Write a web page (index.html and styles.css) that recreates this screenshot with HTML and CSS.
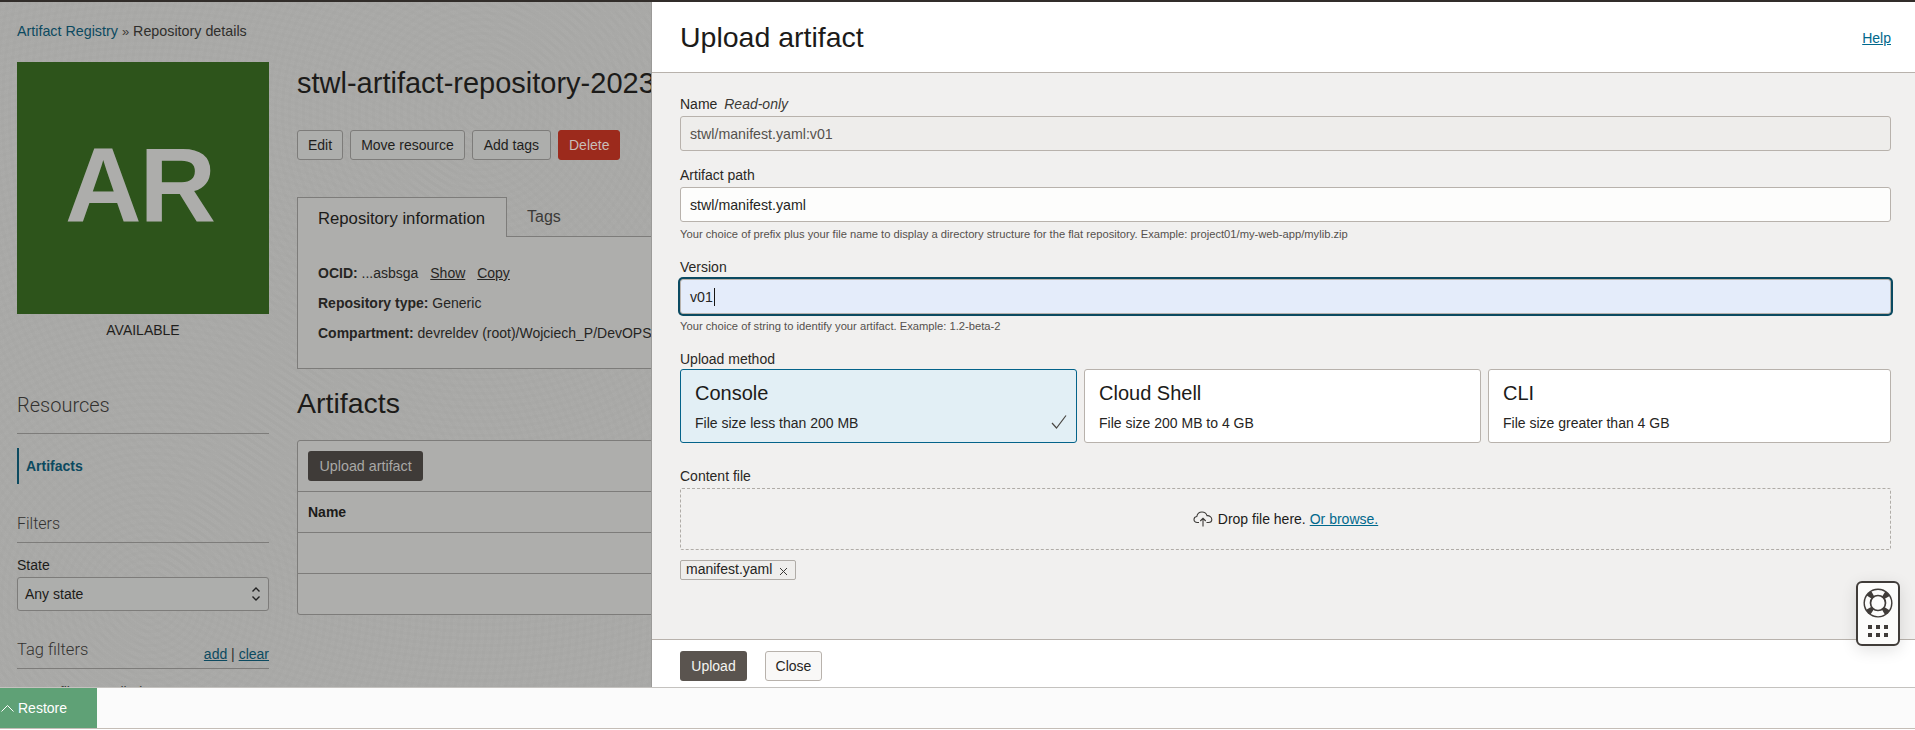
FILE: index.html
```html
<!DOCTYPE html>
<html lang="en">
<head>
<meta charset="utf-8">
<title>Upload artifact</title>
<link rel="stylesheet" href="styles.css">
</head>
<body>
<div class="topbar"></div>
<div class="stage">
  <div class="page">
    <div class="crumbs"><a class="link-plain" href="#">Artifact Registry</a> <span class="sep">»</span> Repository details</div>
    <div class="layout">
      <aside class="side">
        <div class="avatar">AR</div>
        <div class="status">AVAILABLE</div>
        <h3 class="side-head side-head-res">Resources</h3>
        <div class="nav-item">Artifacts</div>
        <h3 class="side-head side-head-filters">Filters</h3>
        <div class="state-label">State</div>
        <div class="select"><span>Any state</span>
          <svg class="select-arrows" width="10" height="16" viewBox="0 0 10 16"><path d="M1.5 5.5 5 2l3.500 3.500M1.500 10.500 5 14l3.500-3.500" fill="none" stroke="#222" stroke-width="1.400"/></svg>
        </div>
        <div class="side-head side-head-tags"><span>Tag filters</span><span class="tag-links"><a href="#">add</a> | <a href="#">clear</a></span></div>
        <div class="no-tags">no tag filters applied</div>
      </aside>
      <main class="content">
        <h1 class="res-title">stwl-artifact-repository-2023</h1>
        <div class="actions">
          <span class="btn">Edit</span><span class="btn">Move resource</span><span class="btn btn-tags">Add tags</span><span class="btn btn-danger">Delete</span>
        </div>
        <div class="tabs"><span class="tab tab-on">Repository information</span><span class="tab tab-off">Tags</span></div>
        <div class="tab-body">
          <div class="info"><b>OCID:</b> ...asbsga <a class="info-link" href="#">Show</a> <a class="info-link" href="#">Copy</a></div>
          <div class="info"><b>Repository type:</b> Generic</div>
          <div class="info"><b>Compartment:</b> devreldev (root)/Wojciech_P/DevOPS</div>
        </div>
        <h2 class="section-title">Artifacts</h2>
        <div class="table">
          <div class="toolbar"><span class="btn-dim">Upload artifact</span></div>
          <div class="row row-head">Name</div>
          <div class="row"></div>
          <div class="row row-last"></div>
        </div>
      </main>
    </div>
  </div>

  <section class="drawer">
    <header class="drawer-head">
      <h2 class="drawer-title">Upload artifact</h2>
      <a class="link" href="#">Help</a>
    </header>
    <div class="drawer-body">
      <div class="label">Name <i class="ro">Read-only</i></div>
      <div class="input input-ro">stwl/manifest.yaml:v01</div>
      <div class="label label-next">Artifact path</div>
      <div class="input">stwl/manifest.yaml</div>
      <div class="hint">Your choice of prefix plus your file name to display a directory structure for the flat repository. Example: project01/my-web-app/mylib.zip</div>
      <div class="label label-after-hint">Version</div>
      <div class="input input-focus">v01<span class="caret"></span></div>
      <div class="hint">Your choice of string to identify your artifact. Example: 1.2-beta-2</div>
      <div class="label label-after-hint">Upload method</div>
      <div class="cards">
        <div class="card card-on">
          <div class="card-title">Console</div>
          <div class="card-sub">File size less than 200 MB</div>
          <svg class="card-check" width="18" height="16" viewBox="0 0 18 16"><path d="M2 9l4.500 5L16 1.500" fill="none" stroke="#4a4743" stroke-width="1.200"/></svg>
        </div>
        <div class="card">
          <div class="card-title">Cloud Shell</div>
          <div class="card-sub">File size 200 MB to 4 GB</div>
        </div>
        <div class="card">
          <div class="card-title">CLI</div>
          <div class="card-sub">File size greater than 4 GB</div>
        </div>
      </div>
      <div class="label label-file">Content file</div>
      <div class="dropzone">
        <svg class="cloud" width="20" height="16" viewBox="0 0 20 16"><path d="M6 11.500H4.200C2.400 11.500 1 10.200 1 8.500S2.300 5.700 3.800 5.500C4.300 2.900 6.400 1 9 1c2.400 0 4.300 1.500 5 3.700 2.500-.3 4.800 1.500 4.800 3.800 0 1.800-1.500 3-3.300 3H13.500M10 15.500V7.500M7.300 10 10 7.300 12.700 10" fill="none" stroke="#3c3a37" stroke-width="1.100"/></svg>
        <span>Drop file here.</span> <a class="link" href="#">Or browse.</a>
      </div>
      <div class="chip">manifest.yaml
        <svg class="chip-x" width="9" height="9" viewBox="0 0 9 9"><path d="M1 1l7 7M8 1 1 8" stroke="#3c3a37" stroke-width="1"/></svg>
      </div>
    </div>
    <footer class="drawer-foot">
      <span class="btn-primary">Upload</span><span class="btn-close">Close</span>
    </footer>
    <div class="help-widget">
      <svg width="30" height="30" viewBox="0 0 32 32">
        <circle cx="16" cy="16" r="15.500" fill="#403c39"/>
        <circle cx="16" cy="16" r="11" fill="none" stroke="#fcfcfb" stroke-width="6" stroke-dasharray="12.280 5" stroke-dashoffset="6.140" transform="rotate(-90 16 16)"/>
        <circle cx="16" cy="16" r="8" fill="#fcfcfb" stroke="#403c39" stroke-width="1.800"/>
      </svg>
      <div class="help-dots"><i></i><i></i><i></i><i></i><i></i><i></i></div>
    </div>
  </section>
</div>
<div class="dock">
  <div class="restore">
    <svg width="13" height="8" viewBox="0 0 13 8"><path d="M.5 7.500 6.500 1.500l6 6" fill="none" stroke="#fff" stroke-width="1"/></svg>
    <span>Restore</span>
  </div>
</div>
</body>
</html>
```

FILE: styles.css
```css
* { box-sizing: border-box; }
html, body { margin: 0; padding: 0; height: 730px; overflow: hidden; background: #fff; }
body { font-family: "Liberation Sans", Arial, sans-serif; font-size: 14px; color: #1c1b19; }
a { color: inherit; }

.topbar { height: 2px; background: #312d2a; }
.stage { position: relative; height: 685px; overflow: hidden; }

.page {
  height: 685px;
  padding: 20px 0 0 17px;
  overflow: hidden;
  background-color: #a9a9a7;
  background-image:
    repeating-radial-gradient(circle at 480px 110px, rgba(0,0,0,.008) 0 3px, rgba(255,255,255,.006) 3px 7px),
    repeating-radial-gradient(circle at 150px 600px, rgba(0,0,0,.008) 0 3px, rgba(255,255,255,.006) 3px 7px);
}
.crumbs { line-height: 18px; height: 18px; font-size: 14.300px; color: #2f2e2c; white-space: nowrap; }
.link-plain { color: #0c4a60; text-decoration: none; }
.sep { color: #3c3b39; font-size: 13px; line-height: 1; }
.layout { display: flex; gap: 28px; margin-top: 22px; width: 1880px; }

.side { width: 252px; flex: none; }
.avatar {
  width: 252px; height: 252px; padding: 0 7px 5px 0; background: #2d541b; color: #adadab;
  font-weight: 700; font-size: 106px; letter-spacing: -2px;
  display: flex; align-items: center; justify-content: center;
}
.status { margin-top: 8px; line-height: 16px; text-align: center; color: #1f1e1c; }
.side-head {
  margin: 0; font-family: Roboto, "Liberation Sans", sans-serif; font-weight: 300; color: #333230;
  border-bottom: 1px solid #7d7c7a;
}
.side-head-res { margin-top: 53px; font-size: 20px; line-height: 28px; padding-bottom: 14px; }
.side-head-filters { margin-top: 28px; font-size: 16px; line-height: 24px; padding-bottom: 6px; }
.side-head-tags { margin-top: 27px; font-size: 16.500px; line-height: 24px; padding-bottom: 6px; display: flex; justify-content: space-between; align-items: flex-end; }
.tag-links { font-family: "Liberation Sans", Arial, sans-serif; font-size: 14px; font-weight: 400; line-height: 16px; color: #2f2e2c; }
.tag-links a { color: #0c4a60; }
.nav-item {
  margin-top: 14px; height: 36px; line-height: 36px; padding-left: 7px;
  border-left: 2px solid #0c4a60; color: #0c4a60; font-weight: 700;
}
.state-label { margin-top: 13px; line-height: 18px; }
.select {
  margin-top: 3px; height: 34px; padding: 0 7px; border: 1px solid #7d7c7a; border-radius: 3px;
  display: flex; align-items: center; justify-content: space-between; background: #adaeac;
}
.no-tags { margin-top: 14px; line-height: 18px; color: #3b3a38; }

.content { flex: 1; min-width: 0; }
.res-title { margin: 4px 0 0; font-weight: 400; font-size: 29px; line-height: 34px; white-space: nowrap; color: #1c1b19; }
.actions { display: flex; gap: 7px; margin-top: 30px; }
.btn, .btn-danger {
  height: 30px; line-height: 28px; padding: 0 10px; border: 1px solid #7d7c7a; border-radius: 3px;
  background: #adaeac; color: #1f1e1c; white-space: nowrap;
}
.btn-tags { padding: 0 11px; }
.btn-danger { background: #9c2a1c; border-color: #9c2a1c; color: #c8bdb8; }
.tabs { display: flex; margin-top: 37px; height: 40px; border-bottom: 1px solid #7d7c7a; }
.tab { padding: 0 20px; line-height: 38px; font-size: 16px; color: #3b3a38; }
.tab-off { padding-top: 1px; }
.tab-on {
  height: 40px; width: 210px; padding-top: 2px; font-size: 16.700px; white-space: nowrap; background: #aeaeac; border: 1px solid #7d7c7a; border-bottom: 0; color: #1c1b19;
}
.tab-body {
  height: 132px; padding: 21px 20px 0; background: #aeaeac;
  border: 1px solid #7d7c7a; border-top: 0; white-space: nowrap;
}
.info { line-height: 30px; color: #262523; }
.info-link { margin-left: 8px; }
.section-title { margin: 17px 0 0; font-weight: 400; font-size: 28.500px; line-height: 34px; color: #1c1b19; }
.table { margin-top: 20px; border: 1px solid #7d7c7a; border-radius: 3px; background: #aeaeac; }
.toolbar { height: 50px; padding: 10px; }
.btn-dim {
  display: inline-block; height: 30px; line-height: 30px; padding: 0 11.500px; font-size: 14.300px;
  background: #3f3b38; color: #a9a8a6; border-radius: 3px;
}
.row { height: 41px; line-height: 40px; padding: 0 10px; border-top: 1px solid #7d7c7a; }
.row-head { font-weight: 700; }
.row-last { height: 41px; }

.drawer {
  position: absolute; top: 0; left: 651px; right: 0; bottom: 0;
  display: flex; flex-direction: column; background: #f1f0ef; border-left: 1px solid #9b9a98;
}
.drawer-head {
  height: 71px; flex: none; padding: 1px 24px 0 28px; background: #fff;
  border-bottom: 1px solid #b8b2ac;
  display: flex; align-items: center; justify-content: space-between;
}
.drawer-title { margin: 0; font-weight: 400; font-size: 28.500px; color: #1c1b19; }
.link { color: #00688c; }
.drawer-body { flex: 1; padding: 21px 24px 0 28px; }
.label { line-height: 20px; color: #2a2825; }
.ro { margin-left: 3px; color: #3c3a37; }
.label-next { margin-top: 14px; }
.label-after-hint { margin-top: 15px; }
.label-file { margin-top: 23px; }
.input {
  margin-top: 2px; height: 35px; line-height: 34px; padding: 0 9px; font-size: 14.200px;
  border: 1px solid #b8b2ac; border-radius: 3px; background: #fdfdfc; color: #262523;
}
.input-ro { background: #eeedeb; color: #55514d; }
.input-focus { background: #e4ecfa; box-shadow: 0 0 0 2px #0b4a61; }
.caret { display: inline-block; width: 1px; height: 18px; margin-left: 1px; vertical-align: -4px; background: #161513; }
.hint { margin-top: 4px; font-size: 11.200px; line-height: 16px; color: #55514d; }
.cards { display: grid; grid-template-columns: 397px 397px 1fr; gap: 7px; }
.card {
  position: relative; height: 74px; padding: 11px 14px 0; background: #fff;
  border: 1px solid #b8b2ac; border-radius: 3px;
}
.card-on { background: #e2eff5; border-color: #04638a; }
.card-title { font-size: 20px; line-height: 24px; color: #1c1b19; }
.card-sub { margin-top: 6px; line-height: 24px; color: #262523; }
.card-check { position: absolute; right: 8px; bottom: 12px; }
.dropzone {
  margin-top: 2px; height: 62px; border: 1px dashed #b0aca7; border-radius: 2px;
  display: flex; align-items: center; justify-content: center; gap: 4px;
}
.cloud { margin-right: 1px; }
.chip {
  margin-top: 10px; width: 116px; height: 20px; line-height: 16px; padding: 0 5px;
  border: 1px solid #b0aca7; border-radius: 2px; background: #efeeec; color: #262523; white-space: nowrap;
}
.chip-x { margin-left: 3px; vertical-align: -2px; }
.drawer-foot { height: 48px; flex: none; padding: 11px 28px 0; background: #fff; border-top: 1px solid #b8b2ac; display: flex; gap: 18px; }
.btn-primary {
  height: 30px; line-height: 30px; width: 67px; text-align: center; background: #5a544f; color: #f5f4f2; border-radius: 3px;
}
.btn-close {
  height: 30px; line-height: 28px; width: 57px; text-align: center; background: #f9f8f7; color: #262523;
  border: 1px solid #b8b2ac; border-radius: 3px;
}
.help-widget {
  position: absolute; left: 1204px; top: 579px; width: 44px; height: 65px;
  padding: 5px 5px 0; background: #fcfcfb; border: 2px solid #403c39; border-radius: 6px;
  box-shadow: 0 4px 16px rgba(0,0,0,.12);
}
.help-widget svg { display: block; margin: 0 auto; }
.help-dots { display: grid; grid-template-columns: repeat(3, 4px); gap: 4px 4px; justify-content: center; margin-top: 7px; }
.help-dots i { width: 4px; height: 4px; background: #403c39; }

.dock { height: 42px; border-top: 1px solid #c4c2bf; border-bottom: 1px solid #c4bdb6; background: #fbfbfb; }
.restore {
  width: 97px; height: 40px; padding-left: 1px; background: #5fa176; color: #fff;
  display: flex; align-items: center; gap: 4px;
}
```
